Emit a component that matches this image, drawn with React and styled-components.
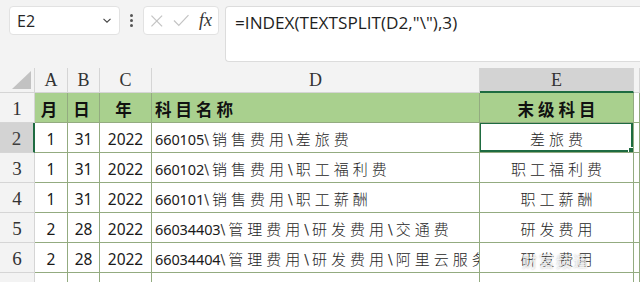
import React from 'react';
import styled, { createGlobalStyle, css } from 'styled-components';

const GlobalStyle = createGlobalStyle`
  html, body {
    margin: 0;
    padding: 0;
    background: #ffffff;
    overflow: hidden;
  }
  body {
    font-family: 'Noto Sans', 'Noto Sans CJK SC', sans-serif;
  }
`;

const GREEN_LINE = '#93ab80';
const GRAY_LINE = '#d5d5d5';

const Page = styled.div`
  width: 640px;
  height: 282px;
  overflow: hidden;
  background: #f3f3f3;
`;

const TopBar = styled.div`
  display: flex;
  align-items: flex-start;
  height: 68px;
  padding: 6px 0 0 9px;
  box-sizing: border-box;
`;

const NameBox = styled.div`
  width: 111px;
  height: 29px;
  box-sizing: border-box;
  background: #fff;
  border: 1px solid #e2e2e2;
  border-radius: 4px;
  display: flex;
  align-items: center;
  justify-content: space-between;
  padding: 0 7px 0 7px;
  font-family: 'Open Sans', sans-serif;
  font-size: 16px;
  color: #262626;
`;

const Dots = styled.div`
  width: 23px;
  height: 29px;
  display: flex;
  flex-direction: column;
  align-items: center;
  justify-content: center;
  gap: 2px;
  span {
    width: 3px;
    height: 3px;
    border-radius: 50%;
    background: #555;
  }
`;

const FxBox = styled.div`
  width: 76px;
  height: 29px;
  box-sizing: border-box;
  background: #fff;
  border: 1px solid #e2e2e2;
  border-radius: 4px;
  display: flex;
  align-items: center;
  padding: 0 6px 0 6px;
  gap: 9px;
`;

const Fx = styled.span`
  font-family: 'Liberation Serif', serif;
  font-style: italic;
  font-size: 18px;
  color: #333;
  margin-left: 1px;
`;

const FormulaBar = styled.div`
  margin-left: 6px;
  flex: 1;
  height: 56px;
  box-sizing: border-box;
  background: #fff;
  border: 1px solid #dcdcdc;
  border-right: none;
  border-radius: 4px 0 0 4px;
  padding: 4px 0 0 9px;
  font-family: 'Open Sans', sans-serif;
  font-size: 17.2px;
  color: #1f1f1f;
  white-space: nowrap;
`;

const Grid = styled.div`
  display: grid;
  grid-template-columns: 35px 33px 32px 52px 328px 154px 1fr;
  grid-template-rows: 25px repeat(6, 30px) 30px;
  background: #fff;
`;

const ColHead = styled.div`
  background: ${p => (p.$active ? '#d3d3d3' : '#f3f3f3')};
  border-right: 1px solid ${GRAY_LINE};
  border-bottom: ${p => (p.$active ? '2px solid #1e6b41' : `1px solid ${GRAY_LINE}`)};
  box-sizing: border-box;
  display: flex;
  align-items: center;
  justify-content: center;
  font-family: 'Liberation Serif', serif;
  font-size: 18px;
  color: #333;
  padding-top: 1px;
`;

const Corner = styled.div`
  background: #f3f3f3;
  border-right: 1px solid ${GRAY_LINE};
  border-bottom: 1px solid ${GRAY_LINE};
  box-sizing: border-box;
  display: flex;
  align-items: flex-end;
  justify-content: flex-end;
  padding: 0 3px 3px 0;
`;

const RowHead = styled.div`
  background: ${p => (p.$active ? '#d3d3d3' : '#f3f3f3')};
  border-right: ${p => (p.$active ? '2px solid #1e6b41' : `1px solid ${GRAY_LINE}`)};
  border-bottom: 1px solid ${GRAY_LINE};
  box-sizing: border-box;
  display: flex;
  align-items: center;
  justify-content: center;
  font-family: 'Liberation Serif', serif;
  font-size: 19px;
  color: ${p => (p.$active ? '#3d3d3d' : '#333')};
  padding-top: 3px;
`;

const Cell = styled.div`
  position: relative;
  box-sizing: border-box;
  border-right: 1px solid ${GREEN_LINE};
  border-bottom: 1px solid ${GREEN_LINE};
  display: flex;
  align-items: center;
  justify-content: ${p => (p.$align === 'left' ? 'flex-start' : 'center')};
  padding: ${p => (p.$align === 'left' ? '2px 0 0 3px' : '2px 0 0 0')};
  white-space: nowrap;
  overflow: hidden;
  font-family: 'Noto Sans', sans-serif;
  font-size: 15.5px;
  color: #1a1a1a;
  ${p => p.$text && css`
    padding-left: 4px;
  `}
  ${p => p.$head && css`
    background: #a9d08e;
    font-weight: 700;
  `}
`;

const Selection = styled.div`
  position: absolute;
  inset: -1px 0 0 -1px;
  border: 2px solid #1e6b41;
  pointer-events: none;
  &::after {
    content: '';
    position: absolute;
    right: -4px;
    bottom: -4px;
    width: 5px;
    height: 5px;
    background: #1e6b41;
    border: 1px solid #fff;
  }
`;

const Han = styled.span`
  font-family: 'Noto Sans CJK SC', sans-serif;
  font-size: ${p => (p.$head ? '16.5px' : '15px')};
  font-weight: ${p => (p.$head ? 700 : 300)};
  letter-spacing: 4px;
  color: ${p => (p.$head ? '#111' : '#262626')};
`;

const Latin = styled.span`
  font-family: 'Noto Sans', sans-serif;
  font-size: 14.5px;
  letter-spacing: -0.1px;
  color: #1a1a1a;
`;

const Slash = styled.span`
  font-family: 'DejaVu Sans', sans-serif;
  font-size: 14px;
  margin: 0 3px 0 0;
  color: #333;
`;

const Watermark = styled.div`
  position: absolute;
  left: 522px;
  top: 182px;
  font-family: 'Noto Sans CJK SC', sans-serif;
  font-size: 15px;
  letter-spacing: 2px;
  color: rgba(255, 255, 255, 0.75);
  text-shadow: 0 0 2px rgba(110, 110, 110, 0.55);
  pointer-events: none;
`;

const GridWrap = styled.div`
  position: relative;
`;

function Mixed({ text, head }) {
  return text.split(/([\u4e00-\u9fff]+|\\)/).filter(Boolean).map((s, i) => {
    if (s === '\\') return <Slash key={i}>{'\\'}</Slash>;
    if (/[\u4e00-\u9fff]/.test(s)) return <Han key={i} $head={head}>{s}</Han>;
    return <Latin key={i}>{s}</Latin>;
  });
}

const rows = [
  ['1', '31', '2022', '660105\\销售费用\\差旅费', '差旅费'],
  ['1', '31', '2022', '660102\\销售费用\\职工福利费', '职工福利费'],
  ['1', '31', '2022', '660101\\销售费用\\职工薪酬', '职工薪酬'],
  ['2', '28', '2022', '66034403\\管理费用\\研发费用\\交通费', '研发费用'],
  ['2', '28', '2022', '66034404\\管理费用\\研发费用\\阿里云服务费', '研发费用'],
];

const ChevronDown = () => (
  <svg width="10" height="7" viewBox="0 0 10 7">
    <path d="M1.5 1.8 L5 5.2 L8.5 1.8" fill="none" stroke="#444" strokeWidth="1.1" />
  </svg>
);

const CrossIcon = () => (
  <svg width="14" height="14" viewBox="0 0 14 14">
    <path d="M1.5 1.5 L12.5 12.5 M12.5 1.5 L1.5 12.5" stroke="#c4c4c4" strokeWidth="1.3" />
  </svg>
);

const CheckIcon = () => (
  <svg width="17" height="13" viewBox="0 0 17 13">
    <path d="M1 6.5 L6 11.5 L16 1" fill="none" stroke="#c4c4c4" strokeWidth="1.3" />
  </svg>
);

const Triangle = () => (
  <svg width="19" height="18" viewBox="0 0 19 18">
    <path d="M19 0 L19 18 L0 18 Z" fill="#c2c2c2" />
  </svg>
);

export default function App() {
  return (
    <Page>
      <GlobalStyle />
      <TopBar>
        <NameBox>
          <span>E2</span>
          <ChevronDown />
        </NameBox>
        <Dots><span /><span /><span /></Dots>
        <FxBox>
          <CrossIcon />
          <CheckIcon />
          <Fx>fx</Fx>
        </FxBox>
        <FormulaBar>=INDEX(TEXTSPLIT(D2,"\"),3)</FormulaBar>
      </TopBar>
      <GridWrap>
        <Grid>
          <Corner><Triangle /></Corner>
          {['A', 'B', 'C', 'D', 'E'].map(c => (
            <ColHead key={c} $active={c === 'E'}>{c}</ColHead>
          ))}
          <ColHead />

          <RowHead>1</RowHead>
          <Cell $head><Mixed text="月" head /></Cell>
          <Cell $head><Mixed text="日" head /></Cell>
          <Cell $head><Mixed text="年" head /></Cell>
          <Cell $head $align="left"><Mixed text="科目名称" head /></Cell>
          <Cell $head $text><Mixed text="末级科目" head /></Cell>
          <Cell />

          {rows.map((r, i) => (
            <React.Fragment key={i}>
              <RowHead $active={i === 0}>{i + 2}</RowHead>
              <Cell>{r[0]}</Cell>
              <Cell>{r[1]}</Cell>
              <Cell>{r[2]}</Cell>
              <Cell $align="left"><Mixed text={r[3]} /></Cell>
              <Cell $text>
                <Mixed text={r[4]} />
                {i === 0 && <Selection />}
              </Cell>
              <Cell />
            </React.Fragment>
          ))}

          <RowHead />
          <Cell /><Cell /><Cell /><Cell /><Cell /><Cell />
        </Grid>
        <Watermark>财富频道</Watermark>
      </GridWrap>
    </Page>
  );
}
